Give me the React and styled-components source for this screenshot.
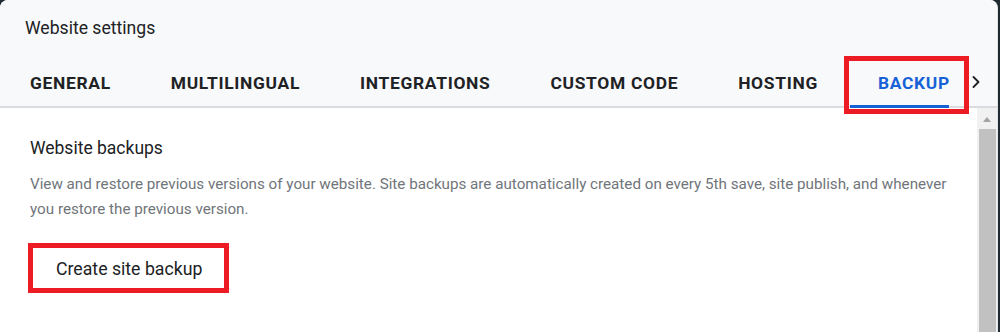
import React from "react";
import styled, { createGlobalStyle, css } from "styled-components";
import { ChevronRight } from "lucide-react";

const GlobalStyle = createGlobalStyle`
  html, body {
    margin: 0;
    padding: 0;
    background: #1f2a31;
  }
  body {
    font-family: Roboto, "Noto Sans", "Liberation Sans", sans-serif;
    -webkit-font-smoothing: antialiased;
  }
`;

const TABS = ["General", "Multilingual", "Integrations", "Custom code", "Hosting", "Backup"];

const marked = css`
  &::before {
    content: "";
    position: absolute;
    border: 5px solid #ed1c24;
    pointer-events: none;
    z-index: 2;
  }
`;

const Page = styled.div`
  display: flex;
  height: 332px;
`;

const Dialog = styled.div`
  width: 997px;
  border-right: 1px solid #e2e3e5;
  border-radius: 8px 8px 0 0;
  background: #fff;
  overflow: hidden;
  display: flex;
  flex-direction: column;
`;

const Header = styled.div`
  background: #f8f9fa;
  border-bottom: 2px solid #dadce0;
`;

const Title = styled.div`
  height: 56px;
  padding-left: 25px;
  display: flex;
  align-items: center;
  font-size: 17.6px;
  color: #202124;
`;

const TabsBar = styled.div`
  display: flex;
  height: 50px;
`;

const TabList = styled.div`
  flex: 1;
  min-width: 0;
  display: flex;
`;

const Tab = styled.div`
  position: relative;
  flex-shrink: 0;
  display: flex;
  align-items: center;
  padding: 3px 30px 0;
  font-size: 17.4px;
  font-weight: 700;
  letter-spacing: 0.69px;
  text-transform: uppercase;
  color: ${(p) => (p.$active ? "#1761d6" : "#202124")};

  ${(p) =>
    p.$active &&
    css`
      &::after {
        content: "";
        position: absolute;
        left: 2px;
        right: 31px;
        bottom: -2px;
        height: 3px;
        background: #1761d6;
        z-index: 1;
      }
    `}

  ${(p) =>
    p.$marked &&
    css`
      ${marked}
      &::before {
        left: -4px;
        right: 11px;
        top: 0;
        bottom: -8px;
      }
    `}
`;

const ScrollButton = styled.div`
  position: relative;
  z-index: 3;
  width: 28px;
  margin-right: 7px;
  display: flex;
  align-items: center;
  justify-content: center;
  padding-top: 2px;
  color: #202124;
`;

const Body = styled.div`
  flex: 1;
  display: flex;
  min-height: 0;
`;

const Main = styled.div`
  flex: 1;
  padding: 30px 30px 0;
`;

const Heading = styled.div`
  font-size: 17.5px;
  line-height: 20px;
  color: #202124;
`;

const Description = styled.p`
  margin: 14px 0 0;
  font-size: 15.2px;
  line-height: 25px;
  color: #70757a;
`;

const Button = styled.button`
  position: relative;
  margin-top: 23px;
  height: 48px;
  padding: 0 26px;
  border: none;
  background: #fff;
  font-family: inherit;
  font-size: 17.7px;
  color: #202124;
  cursor: pointer;

  ${(p) =>
    p.$marked &&
    css`
      ${marked}
      &::before {
        left: -2px;
        right: -1px;
        top: -2px;
        bottom: 0;
      }
    `}
`;

const Scrollbar = styled.div`
  width: 20px;
  background: #f1f1f1;
  display: flex;
  flex-direction: column;
  align-items: center;
`;

const ArrowUp = styled.div`
  margin-top: 9px;
  width: 0;
  height: 0;
  border-left: 4px solid transparent;
  border-right: 4px solid transparent;
  border-bottom: 5px solid #a3a3a3;
`;

const Thumb = styled.div`
  align-self: stretch;
  flex: 1;
  margin: 7px 1px 0 2px;
  background: #c1c1c1;
`;

export default function App() {
  return (
    <Page>
      <GlobalStyle />
      <Dialog>
        <Header>
          <Title>Website settings</Title>
          <TabsBar>
            <TabList>
              {TABS.map((t) => (
                <Tab key={t} $active={t === "Backup"} $marked={t === "Backup"}>
                  {t}
                </Tab>
              ))}
            </TabList>
            <ScrollButton>
              <ChevronRight size={20} strokeWidth={2.2} />
            </ScrollButton>
          </TabsBar>
        </Header>
        <Body>
          <Main>
            <Heading>Website backups</Heading>
            <Description>
              View and restore previous versions of your website. Site backups are
              automatically created on every 5th save, site publish, and whenever you
              restore the previous version.
            </Description>
            <Button $marked>Create site backup</Button>
          </Main>
          <Scrollbar>
            <ArrowUp />
            <Thumb />
          </Scrollbar>
        </Body>
      </Dialog>
    </Page>
  );
}
